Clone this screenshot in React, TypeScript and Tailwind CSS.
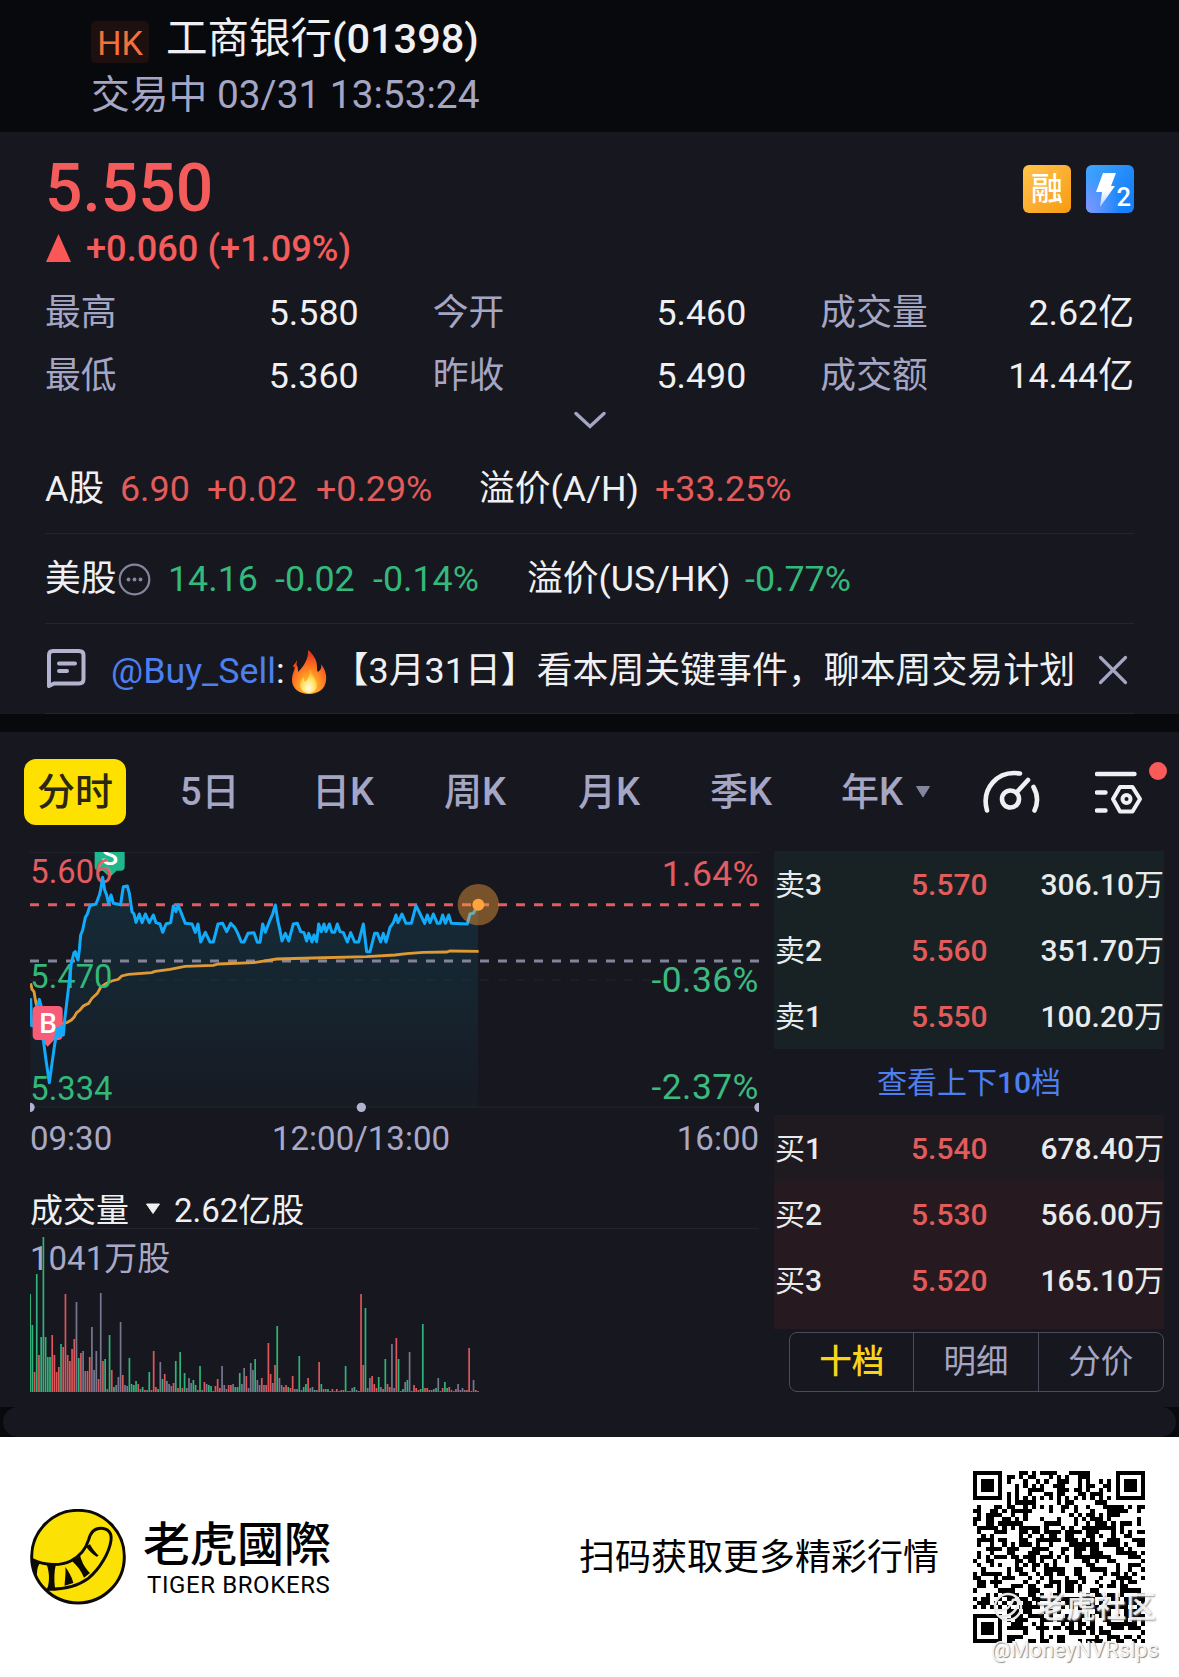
import type { ReactNode } from "react";

const stats = [
  { name: "最高", value: "5.580" },
  { name: "今开", value: "5.460" },
  { name: "成交量", value: "2.62亿" },
  { name: "最低", value: "5.360" },
  { name: "昨收", value: "5.490" },
  { name: "成交额", value: "14.44亿" },
];

const tabs = ["5日", "日K", "周K", "月K", "季K"];

const asks = [
  { side: "卖", level: 3, price: "5.570", qty: "306.10" },
  { side: "卖", level: 2, price: "5.560", qty: "351.70" },
  { side: "卖", level: 1, price: "5.550", qty: "100.20" },
];

const bids = [
  { side: "买", level: 1, price: "5.540", qty: "678.40" },
  { side: "买", level: 2, price: "5.530", qty: "566.00" },
  { side: "买", level: 3, price: "5.520", qty: "165.10" },
];

// three chart units per pixel
const openingPoints =
  "92,475 95,557 105,560 112,500 118,478 124,500 130,600";
const pricePoints =
  "130,600 138,660 148,728 156,670 163,620 172,565 178,590 184,560 190,585 194,540 200,490 206,440 214,370 222,338 226,335 230,350 234,360 238,330 242,285 248,270 256,232 262,222 270,197 288,192 298,165 302,150 308,112 314,150 320,165 326,192 333,165 340,190 362,194 366,165 370,140 382,138 388,160 396,215 402,222 408,247 418,222 426,248 436,222 448,248 460,225 468,248 480,252 488,277 498,252 512,248 520,198 528,215 534,195 542,215 556,250 576,252 586,277 594,252 602,306 616,277 630,306 640,306 654,252 668,250 680,275 692,250 704,262 712,277 724,306 732,306 744,280 762,278 772,307 780,307 788,252 796,277 808,245 818,222 826,195 834,245 838,262 846,303 856,280 866,303 880,252 892,250 902,275 912,278 920,303 926,280 936,306 942,285 950,305 956,252 964,275 972,252 978,275 988,252 996,277 1004,277 1012,252 1020,275 1030,278 1042,306 1052,278 1064,306 1076,306 1090,252 1100,335 1110,335 1124,280 1132,280 1142,306 1150,280 1158,306 1170,262 1180,248 1188,225 1194,248 1206,222 1218,250 1234,250 1248,197 1262,225 1274,250 1282,225 1290,248 1300,222 1312,250 1320,250 1328,225 1336,250 1346,225 1354,250 1402,252 1410,222 1420,220 1434,196";

const averagePoints =
  "92,430 96,448 102,455 108,490 120,530 150,556 200,548 214,540 222,532 230,518 240,510 250,498 266,490 276,475 292,460 302,442 316,432 335,423 355,418 365,408 385,403 455,398 465,394 510,388 555,379 640,376 655,372 760,368 830,357 940,354 1100,350 1185,345 1220,341 1270,337 1340,336 1350,333 1436,334";

// one bar per minute: g = down, r = up, v = flat
const volumes =
  "g98 g67 r20 g118 r37 g55 g155 g55 g35 g35 r57 r37 r20 r25 g48 r45 r98 r37 r31 r43 r53 v90 g34 r39 v41 v21 r21 r35 v65 v22 v41 r13 v99 r31 g33 v3 g57 r22 g5 v7 v15 v70 r17 v7 v6 g34 g8 g7 g11 r8 v3 g5 r2 v2 g20 r2 r41 r5 g3 v30 g13 r18 v11 v8 v6 r9 g31 r4 g40 r4 g19 v4 v14 v9 g12 g7 r2 g26 v2 r10 v8 g7 g6 v1 r6 r13 r4 v26 v7 v3 r7 r7 v8 g5 g5 g19 v8 v24 r16 v4 v29 v22 g33 v12 v7 r14 v7 r7 r49 r18 v9 r27 g66 v14 v7 r5 r7 g5 r4 r16 v3 v3 g36 v2 g5 g8 r14 v4 v5 g2 v2 r30 g8 r3 v3 g3 v1 r3 v1 r3 v1 v2 r2 g26 v1 r1 v4 g5 v2 r1 r98 r27 g84 v4 v14 r16 r8 r4 g15 v5 r3 g33 r8 r5 v48 v4 r54 g33 r1 g3 v10 g12 v40 v1 r7 r4 r2 g3 g68 r4 r4 r2 v2 v3 g4 v14 v1 r4 g10 g4 r5 v2 v1 r3 v8 v2 v4 v2 r2 r44 v1 v12 r2 r1"
    .split(" ")
    .map((v) => ({ kind: v[0], height: Number(v.slice(1)) }));

const barColors: Record<string, string> = {
  g: "#2fb378",
  r: "#dd5659",
  v: "#777790",
};

const QR_SIZE = 41;

function finderModule(r: number, c: number) {
  const ring = Math.max(Math.abs(r - 3), Math.abs(c - 3));
  return ring === 3 || ring < 2;
}

function qrModules() {
  const path: string[] = [];
  let seed = 20231;
  for (let r = 0; r < QR_SIZE; r++) {
    for (let c = 0; c < QR_SIZE; c++) {
      seed = (seed * 1103515245 + 12345) % 2147483648;
      let on = (seed >> 12) % 100 < 52;
      const top = r < 8;
      const left = c < 8;
      const right = c > QR_SIZE - 9;
      const bottom = r > QR_SIZE - 9;
      if ((top && (left || right)) || (bottom && left)) {
        const fr = bottom ? r - QR_SIZE + 7 : r;
        const fc = right ? c - QR_SIZE + 7 : c;
        on = fr >= 0 && fr < 7 && fc >= 0 && fc < 7 && finderModule(fr, fc);
      } else if (r === 6 || c === 6) {
        on = (r + c) % 2 === 0;
      } else if (Math.abs(r - 34) < 3 && Math.abs(c - 34) < 3) {
        on = Math.max(Math.abs(r - 34), Math.abs(c - 34)) !== 1;
      }
      if (on) path.push(`M${c} ${r}h1v1h-1z`);
    }
  }
  return path.join("");
}

function PriceChart() {
  return (
    <svg
      className="block h-[260px] w-[729px]"
      viewBox="90 36 2187 780"
      fontFamily="Roboto, sans-serif"
    >
      <defs>
        <linearGradient id="area" x1="0" y1="0" x2="0" y2="1">
          <stop offset="0" stopColor="#00b4e6" stopOpacity="0.13" />
          <stop offset="0.5" stopColor="#00b4e6" stopOpacity="0.08" />
          <stop offset="1" stopColor="#00a2ff" stopOpacity="0.02" />
        </linearGradient>
      </defs>
      <path d="M90 37H2277M90 801H2277" stroke="#23242d" strokeWidth="3" />
      <path
        d="M90 420H2277"
        stroke="#23242d"
        strokeWidth="3"
        strokeDasharray="27 27"
      />
      <polygon
        points={`92,801 ${openingPoints} ${pricePoints} 1434,801`}
        fill="url(#area)"
      />
      <path
        d="M90 194H2277"
        stroke="#e25c61"
        strokeWidth="9"
        strokeDasharray="27 27"
      />
      <path
        d="M90 363H2277"
        stroke="#83849a"
        strokeWidth="9"
        strokeDasharray="27 27"
      />
      <polyline
        points={averagePoints}
        fill="none"
        stroke="#e09a35"
        strokeWidth="8.5"
      />
      <polyline
        points={openingPoints}
        fill="none"
        stroke="#12abfb"
        strokeWidth="9"
        strokeLinejoin="round"
      />
      <path
        d="M284 0h90v80q0 12-12 12h-12l-21 20l-21-20h-12q-12 0-12-12z"
        fill="#1fb78b"
      />
      <text x="329" y="74" fontSize="84" fontWeight="500" fill="#fff" textAnchor="middle">
        S
      </text>
      <path
        d="M112 498h62q14 0 14 14v74q0 14-14 14h-12l-19 20l-19-20h-12q-14 0-14-14v-74q0-14 14-14z"
        fill="#f95c77"
      />
      <text x="144" y="580" fontSize="84" fontWeight="500" fill="#fff" textAnchor="middle">
        B
      </text>
      <g fontSize="98">
        <text x="91" y="128" fill="#e25c61">5.606</text>
        <text x="91" y="443" fill="#34b878">5.470</text>
        <text x="91" y="779" fill="#34b878">5.334</text>
      </g>
      <g fontSize="106" letterSpacing="1.5" textAnchor="end">
        <text x="2277" y="137" fill="#e25c61">1.64%</text>
        <text x="2277" y="456" fill="#3cba80">-0.36%</text>
        <text x="2277" y="777" fill="#3cba80">-2.37%</text>
      </g>
      <polyline
        points={pricePoints}
        fill="none"
        stroke="#12abfb"
        strokeWidth="9"
        strokeLinejoin="round"
      />
      <circle cx="1435" cy="194" r="62" fill="#ffa53c" fillOpacity="0.42" />
      <circle cx="1435" cy="194" r="18" fill="#ffa53c" />
      <g fill="#b3b3cf">
        <circle cx="90" cy="802" r="14" />
        <circle cx="1084" cy="802" r="14" />
        <circle cx="2277" cy="802" r="14" />
      </g>
    </svg>
  );
}

function VolumeChart() {
  return (
    <svg
      className="block h-[164px] w-[729px]"
      viewBox="0 0 729 164"
      fontFamily="Roboto, 'Noto Sans CJK SC', sans-serif"
    >
      <text x="0" y="40.5" fontSize="33" fill="#a9a9c6">
        1041万股
      </text>
      {volumes.map((bar, i) => (
        <rect
          key={i}
          x={i * 2.206 - 0.7}
          y={163 - bar.height}
          width="1.7"
          height={bar.height}
          fill={barColors[bar.kind]}
        />
      ))}
    </svg>
  );
}

type Level = { side: string; level: number; price: string; qty: string };

function BookRow({ row }: { row: Level }) {
  return (
    <div className="flex h-[66px] items-center pl-px text-[30px] font-medium text-[#e8ebec]">
      <span className="w-[136px]">
        <span className="font-normal">{row.side}</span>
        {row.level}
      </span>
      <span className="text-[#e25c5c]">{row.price}</span>
      <span className="ml-auto">
        {row.qty}
        <span className="font-normal">万</span>
      </span>
    </div>
  );
}

function Cell({ left, children }: { left: string; children: ReactNode }) {
  return <span className={left}>{children}</span>;
}

function FireIcon() {
  return (
    <svg className="h-[46px] w-[36px]" viewBox="0 0 36 46">
      <defs>
        <radialGradient id="fire" cx="0.5" cy="0.85" r="0.75">
          <stop offset="0" stopColor="#ffd13a" />
          <stop offset="0.4" stopColor="#ff9a24" />
          <stop offset="0.75" stopColor="#fb6122" />
          <stop offset="1" stopColor="#e23a1c" />
        </radialGradient>
        <radialGradient id="core" cx="0.5" cy="0.8" r="0.6">
          <stop offset="0" stopColor="#fffbe0" />
          <stop offset="0.6" stopColor="#ffe46a" />
          <stop offset="1" stopColor="#ffb62f" />
        </radialGradient>
      </defs>
      <path
        d="M17 1c5 4 9 10 9 16c0 3 0 5 1 6c3-2 4-5 3-8c4 5 6 11 5 17c-1 8-8 13-17 13S1 40 1 31c0-6 3-11 4-16c2 3 2 5 2 8C12 18 18 10 17 1z"
        fill="url(#fire)"
      />
      <path
        d="M2 17c1-2 3-3 4-6c0 3-1 6-2 8z"
        fill="#f0501f"
      />
      <path
        d="M19 19c0 6 7 10 7 17c0 5-4 8-8 8s-9-3-9-8c0-4 2-6 4-8c0 2 0 4 1 5c4-3 5-8 5-14z"
        fill="url(#core)"
      />
    </svg>
  );
}

function TigerLogo() {
  return (
    <svg className="h-[96px] w-[96px]" viewBox="0 0 288 288">
      <circle cx="144" cy="143" r="139" fill="#fbe104" stroke="#0c0a05" strokeWidth="9" />
      <path
        d="M7 152C45 170 90 172 122 156C150 142 167 122 176 92C182 70 192 58 212 58C234 58 246 72 243 94C238 130 210 180 175 208C140 234 100 242 50 241"
        fill="none"
        stroke="#0c0a05"
        strokeWidth="9"
      />
      <path
        d="M6 148L32 160C22 172 21 184 21 200C10 182 5 166 6 148z M50 166L78 165C72 188 72 212 75 238L52 240C60 214 58 190 50 166z M106 174C108 196 104 218 104 230L130 222C126 204 116 188 106 174z M126 156L150 138C156 162 166 178 180 192L162 206C154 186 142 170 126 156z M168 112L180 106C186 118 196 130 206 140L200 143C188 136 176 126 168 112z"
        fill="#0c0a05"
      />
    </svg>
  );
}

export default function App() {
  return (
    <div className="w-[1179px] overflow-hidden bg-[#17181f] font-[Roboto,'Noto_Sans_CJK_SC',sans-serif] text-[#f0f0f2]">
      <header className="h-[132px] bg-[#08090c] pt-[13px] pl-[91px]">
        <div className="flex h-[52px] items-center text-[41.5px] leading-none">
          <span className="mt-[6px] mr-[17px] flex h-[42px] w-[58px] items-center justify-center rounded-[5px] bg-[#1d100e] pt-[2px] text-[34px] text-[#f4713a]">
            HK
          </span>
          <span>工商银行</span>
          <span className="font-medium">(01398)</span>
        </div>
        <div className="mt-[2px] h-14 text-[38.8px] leading-[56px] text-[#a5a5c4]">
          交易中 03/31 13:53:24
        </div>
      </header>

      <section className="h-[582px] px-[45px] pt-[20px]">
        <div className="flex h-[72px] justify-between">
          <div className="mt-[1px] text-[66px] leading-[72px] font-medium text-[#f45b5b]">
            5.550
          </div>
          <div className="mt-[13px] flex gap-[15px]">
            <div className="flex h-[48px] w-[48px] items-center justify-center rounded-[6px] bg-gradient-to-br from-[#ffc44a] to-[#f79a06] text-[32px] leading-none font-medium text-white">
              融
            </div>
            <svg className="h-[48px] w-[48px]" viewBox="0 0 48 48">
              <defs>
                <linearGradient id="lv2" x1="0" y1="0" x2="1" y2="0.6">
                  <stop offset="0" stopColor="#43a6fb" />
                  <stop offset="1" stopColor="#1480fb" />
                </linearGradient>
                <radialGradient id="lv2glow" cx="0" cy="0.9" r="0.7">
                  <stop offset="0" stopColor="#7f95ff" />
                  <stop offset="1" stopColor="#7f95ff" stopOpacity="0" />
                </radialGradient>
                <linearGradient id="bolt" x1="0" y1="0" x2="0" y2="1">
                  <stop offset="0.5" stopColor="#fff" />
                  <stop offset="1" stopColor="#fff" stopOpacity="0.6" />
                </linearGradient>
              </defs>
              <rect width="48" height="48" rx="6" fill="url(#lv2)" />
              <rect width="48" height="48" rx="6" fill="url(#lv2glow)" />
              <path d="M17 8h13l-5 13h4L14 42l2-15h-6z" fill="url(#bolt)" />
              <text x="30.500" y="41" fontSize="25.500" fontWeight="500" fontFamily="Roboto, sans-serif" fill="#fff">
                2
              </text>
            </svg>
          </div>
        </div>
        <div className="flex h-[48px] items-center text-[36.2px] text-[#f45b5b]">
          <svg className="mr-[15px] ml-px h-[28px] w-[25px]" viewBox="0 0 25 28">
            <path d="M12.5 0L25 28H0z" fill="#fb5755" />
          </svg>
          <span className="pt-[3px] font-medium">+0.060 (+1.09%)</span>
        </div>

        <dl className="mt-[10px] grid grid-cols-3 gap-x-[74px]">
          {stats.map((item) => (
            <div
              key={item.name}
              className="flex h-[63px] items-center justify-between text-[35.8px]"
            >
              <dt className="text-[#a5a5c4]">{item.name}</dt>
              <dd>{item.value}</dd>
            </div>
          ))}
        </dl>
        <svg className="mx-auto mt-[3px] block h-[18px] w-[32px]" viewBox="0 0 32 18">
          <path
            d="M2 2.5L16 15.5L30 2.5"
            fill="none"
            stroke="#a5a5c4"
            strokeWidth="3.4"
            strokeLinecap="round"
          />
        </svg>

        <div className="mt-[14px] flex h-[91px] items-center border-b border-[#23242d] pt-[3px] text-[35.8px] text-[#e25c5c]">
          <Cell left="w-[75px] text-[#f0f0f2]">A股</Cell>
          <Cell left="w-[87px]">6.90</Cell>
          <Cell left="w-[109px]">+0.02</Cell>
          <Cell left="w-[163px]">+0.29%</Cell>
          <Cell left="w-[176px] text-[#f0f0f2]">溢价(A/H)</Cell>
          <Cell left="">+33.25%</Cell>
        </div>
        <div className="flex h-[90px] items-center border-b border-[#23242d] pt-[2px] text-[35.8px] text-[#34b97c]">
          <Cell left="w-[73px] text-[#f0f0f2]">美股</Cell>
          <svg className="h-[33px] w-[33px]" viewBox="0 0 33 33">
            <circle cx="16.5" cy="16.5" r="14.8" fill="none" stroke="#85859d" strokeWidth="2.2" />
            <g fill="#85859d">
              <circle cx="10.5" cy="16.5" r="1.9" />
              <circle cx="16.5" cy="16.5" r="1.9" />
              <circle cx="22.5" cy="16.5" r="1.9" />
            </g>
          </svg>
          <Cell left="ml-[17px] w-[107px]">14.16</Cell>
          <Cell left="w-[98px]">-0.02</Cell>
          <Cell left="w-[154px]">-0.14%</Cell>
          <Cell left="w-[218px] text-[#f0f0f2]">溢价(US/HK)</Cell>
          <Cell left="">-0.77%</Cell>
        </div>
        <div className="flex h-[90px] items-center border-b border-[#23242d] pt-[7px] text-[35.8px] whitespace-nowrap">
          <svg className="-mt-[6px] ml-[2px] h-[40px] w-[39px]" viewBox="0 0 39 40">
            <path
              d="M2 37V6Q2 2 6 2H32Q36.500 2 36.500 6V30Q36.500 34.500 32 34.500H7z"
              fill="none"
              stroke="#b3b3cf"
              strokeWidth="4"
              strokeLinejoin="round"
            />
            <path d="M12 14.500H28M12 22H20" stroke="#b3b3cf" strokeWidth="4" strokeLinecap="round" />
          </svg>
          <span className="ml-[25px] text-[#4d7fee]">@Buy_Sell</span>
          <span className="mr-[6px]">:</span>
          <FireIcon />
          <span className="ml-[6px] text-[35.9px]">
            【3月31日】看本周关键事件，聊本周交易计划
          </span>
          <svg className="-mt-[5px] mr-[6px] ml-auto h-[30px] w-[30px] shrink-0" viewBox="0 0 30 30">
            <path
              d="M2.500 2.500L27.500 27.500M27.500 2.500L2.500 27.500"
              stroke="#a5a5c4"
              strokeWidth="3.2"
              strokeLinecap="round"
            />
          </svg>
        </div>
      </section>

      <div className="h-[18px] bg-[#08090c]" />

      <section className="h-[675px]">
        <nav className="grid h-[119px] grid-cols-[156px_132px_132px_134px_132px_131px_141px_113px_1fr] items-center pt-px pl-[24px] text-[38px] font-medium text-[#a5a5c4]">
          <div className="flex h-[66px] w-[102px] items-center justify-center rounded-[12px] bg-[#ffe100] text-[#2b2715]">
            分时
          </div>
          {tabs.map((tab) => (
            <div key={tab}>{tab}</div>
          ))}
          <div className="flex items-center">
            年K
            <svg className="ml-[12px] h-[12px] w-[16px]" viewBox="0 0 16 12">
              <path d="M1.500 0.500h13l-6.500 10.500z" fill="#85859d" stroke="#85859d" strokeLinejoin="round" />
            </svg>
          </div>
          <svg className="h-[46px] w-[58px]" viewBox="0 0 58 46" fill="none" stroke="#f0f0f2" strokeWidth="4.600" strokeLinecap="round">
            <path d="M5 41.500C-1 20 15 1 38 4.500M51.500 18C56 26 56 34 52.500 41.500" />
            <circle cx="28.500" cy="30" r="8.500" />
            <path d="M34.500 23.500L46 11" />
          </svg>
          <div className="relative h-[46px] w-[50px] pt-px">
            <svg className="h-[46px] w-[50px]" viewBox="0 0 50 46" fill="none" stroke="#f0f0f2" strokeWidth="4.400" strokeLinecap="round" strokeLinejoin="round">
              <path d="M2 4H39.500M2 22.500H10.500M2 40.500H10.500" />
              <path d="M25 17H37.500L45 29L37.500 41.500H25L18 29z" strokeWidth="4" />
              <circle cx="31.500" cy="29" r="4" strokeWidth="4" />
            </svg>
            <span className="absolute -top-[7px] left-[54px] h-[18px] w-[18px] rounded-full bg-[#f85b58]" />
          </div>
        </nav>

        <div className="flex pl-[30px]">
          <div className="mt-px w-[729px]">
            <PriceChart />
            <div className="grid h-[52px] grid-cols-3 items-center pt-[2px] text-[33px] text-[#a9a9c6]">
              <span>09:30</span>
              <span className="-ml-[1px]">12:00/13:00</span>
              <span className="text-right">16:00</span>
            </div>
            <div className="mt-[26px] flex h-[39px] items-center border-b border-[#23242d] pt-[2px] text-[33px] leading-none">
              成交量
              <svg className="-mt-[2px] mr-[13px] ml-[16px] h-[12px] w-[16px]" viewBox="0 0 16 12">
                <path d="M1.500 1h13l-6.500 9.500z" fill="#f0f0f2" stroke="#f0f0f2" strokeLinejoin="round" />
              </svg>
              2.62亿股
            </div>
            <VolumeChart />
          </div>

          <div className="ml-[15px] w-[390px]">
            <div className="bg-[#182224]">
              {asks.map((row) => (
                <BookRow key={row.level} row={row} />
              ))}
            </div>
            <div className="flex h-[66px] items-center justify-center text-[30px] text-[#4d7fee]">
              <span>
                查看上下<span className="font-medium">10</span>档
              </span>
            </div>
            <div className="h-[214px] bg-gradient-to-b from-[#1f1920] from-31% to-[#261a20] to-31%">
              {bids.map((row) => (
                <BookRow key={row.level} row={row} />
              ))}
            </div>
            <div className="mt-[3px] ml-[15px] grid h-[60px] grid-cols-3 divide-x divide-[#4b4b5a] rounded-[8px] border border-[#4b4b5a] text-center text-[32.5px] leading-[58px] text-[#a5a5c4]">
              <span className="font-medium text-[#fbd41a]">十档</span>
              <span>明细</span>
              <span>分价</span>
            </div>
          </div>
        </div>
      </section>

      <div className="h-[30px] bg-[#08090c] px-[3px]">
        <div className="h-[30px] rounded-full bg-[#17181f]" />
      </div>

      <footer className="flex h-[240px] items-center bg-white pl-[30px] text-black">
        <TigerLogo />
        <div className="mt-[2px] ml-[17px] w-[190px]">
          <div className="font-['Noto_Sans_CJK_TC',sans-serif] text-[47px] leading-[50px] font-medium">
            老虎國際
          </div>
          <div className="mt-[3px] ml-[4px] text-[24px] leading-[32px] tracking-[0.6px] whitespace-nowrap">
            TIGER BROKERS
          </div>
        </div>
        <div className="mt-[2px] ml-[246px] text-[36px]">扫码获取更多精彩行情</div>
        <div className="relative ml-[34px] h-[172px] w-[172px]">
          <svg className="h-[172px] w-[172px]" viewBox="0 0 41 41" shapeRendering="crispEdges">
            <path d={qrModules()} fill="#000" />
          </svg>
          <div className="absolute top-[117px] left-[20px] flex items-center gap-[13px] text-[30px] leading-[38px] font-medium whitespace-nowrap text-white/85 [text-shadow:1px_1px_2px_#999]">
            <svg className="h-[30px] w-[30px]" viewBox="0 0 30 30" fill="none" stroke="#e8e8e8" strokeWidth="2.500">
              <circle cx="15" cy="15" r="13" />
              <path d="M4 18C13 20 18 14 20 8C25 6 27 11 23 17C19 23 13 25 7 24" />
            </svg>
            老虎社区
          </div>
          <div className="absolute top-[167px] left-[18px] text-[21.8px] leading-[24px] whitespace-nowrap text-[#f4f4f4] [text-shadow:1px_1px_1px_#888]">
            @MoneyNVRslps
          </div>
        </div>
      </footer>
    </div>
  );
}
